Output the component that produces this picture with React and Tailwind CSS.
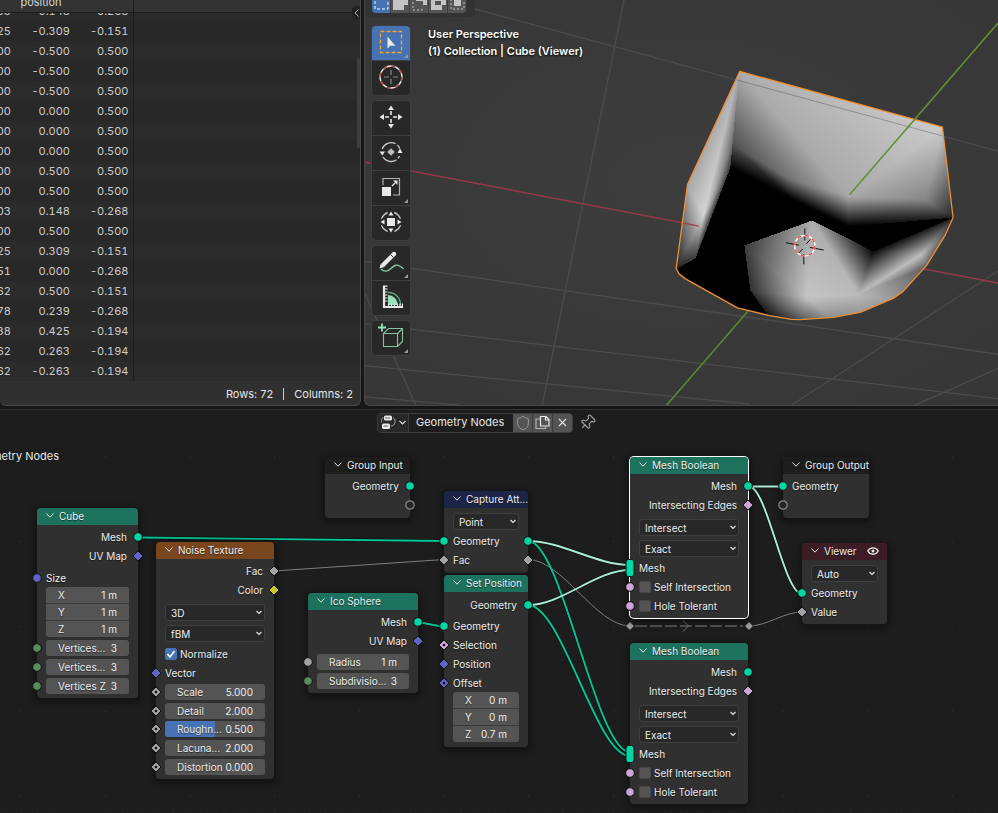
import React from "react";
import { Shield, X, Pin } from "lucide-react";

/* ---------- spreadsheet ---------- */

const ROWS = [
  ["03", "-0.148", "-0.268"],
  ["25", "-0.309", "-0.151"],
  ["00", "-0.500", "0.500"],
  ["00", "-0.500", "0.500"],
  ["00", "-0.500", "0.500"],
  ["00", "0.000", "0.500"],
  ["00", "0.000", "0.500"],
  ["00", "0.000", "0.500"],
  ["00", "0.500", "0.500"],
  ["00", "0.500", "0.500"],
  ["03", "0.148", "-0.268"],
  ["00", "0.500", "0.500"],
  ["25", "0.309", "-0.151"],
  ["51", "0.000", "-0.268"],
  ["62", "0.500", "-0.151"],
  ["78", "0.239", "-0.268"],
  ["38", "0.425", "-0.194"],
  ["62", "0.263", "-0.194"],
  ["62", "-0.263", "-0.194"],
];

function Spreadsheet() {
  return (
    <section className="relative flex min-h-0 min-w-0 flex-col overflow-hidden rounded-b-md border-r border-b border-[#474747] bg-[#303030]">
      <div className="flex h-[13px] shrink-0 items-end overflow-hidden border-b border-[#1c1c1c] bg-[#333333]">
        <div className="flex h-5 w-[134px] shrink-0 items-center justify-center border-r border-[#1c1c1c] pr-[51px] text-[11px] text-[#d6d6d6]">
          position
        </div>
      </div>
      <div className="relative flex min-h-0 flex-1 flex-col justify-end overflow-hidden">
        <table className="w-full shrink-0 table-fixed border-collapse text-[11px] tabular-nums text-[#cccccc]">
          <colgroup>
            <col className="w-[11px]" />
            <col className="w-[59px]" />
            <col className="w-[63px]" />
            <col />
          </colgroup>
          <tbody>
            {ROWS.map((r, i) => (
              <tr key={i} className="h-5 odd:bg-[#2b2b2b] even:bg-[#282828]">
                <td className="p-0">
                  <div className="flex justify-end overflow-hidden leading-5">{r[0]}</div>
                </td>
                <td className="p-0 text-right leading-5">{r[1]}</td>
                <td className="border-r border-[#1c1c1c] p-0 pr-1 text-right leading-5">{r[2]}</td>
                <td className="p-0" />
              </tr>
            ))}
          </tbody>
        </table>
        <div className="absolute top-[45px] right-0 h-[90px] w-[3px] rounded-full bg-[#3d3d3d]" />
      </div>
      <div className="absolute top-1.5 right-0 flex h-[14px] w-2 items-center justify-center rounded-l bg-[#222222]">
        <svg width="5" height="8" viewBox="0 0 5 8" fill="none" stroke="#b0b0b0">
          <path d="M4.5 .5 1 4l3.500 3.500" />
        </svg>
      </div>
      <footer className="flex h-6 shrink-0 items-center justify-end gap-[10px] pt-[2px] pr-[7px] text-[11px] text-[#e6e6e6]">
        <span>Rows: 72</span>
        <span className="h-3 w-px bg-[#d0d0d0]" />
        <span>Columns: 2</span>
      </footer>
    </section>
  );
}

/* ---------- 3D viewport ---------- */

// Vertices of the viewed mesh: x, y, grey level.
const V = {
  tl: [739, 70, 173],
  tr: [944, 126, 204],
  r: [954, 218, 35],
  m: [848, 227, 0],
  mm: [848, 197, 168],
  e: [925, 200, 135],
  bl: [730, 168, 0],
  bm: [732, 145, 80],
  f: [789, 179, 115],
  g: [789, 198, 0],
  l: [686, 185, 165],
  h: [703, 216, 212],
  b: [675, 270, 30],
  c: [695, 259, 60],
  d: [730, 168, 55],
  dm: [732, 145, 110],
  p: [812, 221, 172],
  q: [744, 246, 60],
  t: [750, 291, 50],
  u: [768, 317, 20],
  v: [800, 322, 80],
  w: [807, 298, 196],
  x: [833, 320, 140],
  y: [860, 315, 150],
  k: [858, 295, 186],
  s: [873, 252, 10],
  n: [920, 256, 190],
  o: [928, 267, 90],
  o2: [947, 236, 80],
  z: [896, 301, 150],
};

const TRIANGLES = [
  "tl tr mm", "tl bm f", "tl f mm", "bm bl g", "bm g f", "f g m", "f m mm",
  "m e mm", "m r e", "mm tr e", "tr r e",
  "tl l h", "tl h dm", "dm h d", "l b h", "b c h", "h c d",
  "p q w", "q t w", "t u w", "u v w", "v x w", "w x k", "x y k",
  "p w k", "p s k", "s n k", "s r n", "n r o2", "n o2 o", "k n o", "k o z", "k z y",
];

const grey = (v) => `rgb(${v},${v},${v})`;

// A linear gradient that interpolates the three grey levels over the triangle.
function Triangle({ id, pts }) {
  const [[x0, y0, g0], [x1, y1, g1], [x2, y2, g2]] = pts;
  const det = (x1 - x0) * (y2 - y0) - (x2 - x0) * (y1 - y0);
  const a = ((g1 - g0) * (y2 - y0) - (g2 - g0) * (y1 - y0)) / det;
  const b = ((x1 - x0) * (g2 - g0) - (x2 - x0) * (g1 - g0)) / det;
  const lo = pts.reduce((m, p) => (p[2] < m[2] ? p : m));
  const hi = pts.reduce((m, p) => (p[2] > m[2] ? p : m));
  const k = (hi[2] - lo[2]) / (a * a + b * b);
  return (
    <>
      <linearGradient id={id} gradientUnits="userSpaceOnUse" x1={lo[0]} y1={lo[1]} x2={lo[0] + a * k} y2={lo[1] + b * k}>
        <stop offset="0" stopColor={grey(lo[2])} />
        <stop offset="1" stopColor={grey(hi[2])} />
      </linearGradient>
      <polygon points={pts.map((p) => `${p[0]},${p[1]}`).join(" ")} fill={`url(#${id})`} />
    </>
  );
}

const OUTLINE =
  "M739.300 71.700 942.300 127.500 953 218 945 236 926.500 266 903 292 893 299 860 313 833 318 800 320.300 791 320 768 316 737 308.500 685 279.500 678.500 274.500 675.700 269 687 185Z";

function Scene() {
  return (
    <svg className="absolute inset-0 h-full w-full" viewBox="364 0 634 406" preserveAspectRatio="xMidYMid slice" fill="none">
      <defs>
        <radialGradient id="world" cx="0.5" cy="0.45" r="0.75">
          <stop offset="0" stopColor="#3d3d3d" />
          <stop offset="1" stopColor="#363636" />
        </radialGradient>
        <clipPath id="body"><path d={OUTLINE} /></clipPath>
      </defs>
      <rect x="364" width="634" height="406" fill="url(#world)" />
      <g stroke="#4c4c4c" strokeWidth="1.300">
        <path d="M440 0 640 54 998 151.500M623.500 0 541.500 406M364 262.300 600 296.500 797 325 998 355M364 324.300 600 352.300 998 399.500M364 366.300 750 405M364 397.700 460 406M364 294.300 415 406M791 406 998 271.700M915 406 998 369" />
      </g>
      <path d="M364 162.600 720 230.500M900 265 998 283.700" stroke="#97394a" strokeWidth="1.500" />
      <path d="M747.500 312 666 406" stroke="#5f882b" strokeWidth="1.600" />
      <path d={OUTLINE} fill="#000" />
      <g clipPath="url(#body)">
        <g shapeRendering="crispEdges">
          {TRIANGLES.map((t, i) => (
            <Triangle key={t} id={`tri${i}`} pts={t.split(" ").map((k) => V[k])} />
          ))}
        </g>
        <path d="M640 54 998 151.500" stroke="#000" strokeOpacity="0.25" />
        <path d="M670 221.200 698.500 226.700" stroke="#9c4050" strokeWidth="1.300" />
      </g>
      <path d={OUTLINE} stroke="#ee9135" strokeWidth="1.300" strokeLinejoin="round" />
      <path d="M849.500 195 998 23.300" stroke="#65902d" strokeWidth="1.600" />
      <g stroke="#111" strokeWidth="1">
        <path d="M804.500 229v12M803.500 255v10M785.500 243.300l13 2.400M809.500 248l14 2.600M810 240l-4 4.500M802.500 249.500l-4 4" />
      </g>
      <circle cx="804.500" cy="246.300" r="10.200" stroke="#fff" strokeWidth="1.400" />
      <circle cx="804.500" cy="246.300" r="10.200" stroke="#f0474a" strokeWidth="1.400" strokeDasharray="4 4.010" />
    </svg>
  );
}

const Corner = () => (
  <svg className="absolute right-[2px] bottom-[2px]" width="4" height="4" viewBox="0 0 4 4">
    <path d="M4 0v4H0z" fill="#9a9a9a" />
  </svg>
);

const ICONS = {
  select: (
    <>
      <rect x="2.500" y="2.500" width="21" height="21" stroke="#f5a623" strokeWidth="1.300" strokeDasharray="4 2" />
      <path d="M9.500 7.500v12l3-3 5 .500z" fill="#e8e8e8" />
    </>
  ),
  cursor: (
    <>
      <circle cx="13" cy="13" r="11" stroke="#e8e8e8" strokeWidth="1.300" />
      <circle cx="13" cy="13" r="11" stroke="#a94444" strokeWidth="1.400" strokeDasharray="4.320 4.320" />
      <path d="M13 6v5M13 15v5M6 13h5M15 13h5" stroke="#8a8a8a" strokeWidth="1.200" />
    </>
  ),
  move: (
    <>
      <path d="M13 7v4M13 15v4M7 13h4M15 13h4" stroke="#e8e8e8" strokeWidth="1.600" />
      <path d="M13 1.500 16 6h-6zM13 24.500l3-4.500h-6zM1.500 13 6 10v6zM24.500 13 20 10v6z" fill="#e8e8e8" />
    </>
  ),
  rotate: (
    <>
      <path d="M4.200 10a9.500 9.500 0 0 1 13.300-5.300M5 18a9.500 9.500 0 0 0 13.500 2.800M19.500 6a9.500 9.500 0 0 1 2.200 3.500M20 19.300a9.500 9.500 0 0 0 1.500-2.300" stroke="#c8c8c8" strokeWidth="1.300" />
      <path d="m13 9.200 3.800 3.800-3.800 3.800L9.200 13z" fill="#bdbdbd" />
      <path d="M1.500 12.500h5.500L4.300 16.500zM19.500 14h5L22 9.500z" fill="#e8e8e8" />
    </>
  ),
  scale: (
    <>
      <path d="M5 11V4.500h16.500v16.500H15" stroke="#b0b0b0" strokeWidth="1.200" />
      <path d="M4 13h9v9H4z" fill="#e8e8e8" />
      <path d="m14 12 3-3" stroke="#e8e8e8" strokeWidth="1.300" />
      <path d="M19.500 6.500v4.500l-4.500-4.500z" fill="#e8e8e8" />
    </>
  ),
  transform: (
    <>
      <circle cx="13" cy="13" r="10" stroke="#c8c8c8" strokeWidth="1.300" />
      <path d="M13 .500v7M13 18.500v7M.500 13h7M18.500 13h7" stroke="#282828" strokeWidth="6.500" />
      <path d="M9 9h8v8H9z" fill="#e8e8e8" />
      <path d="m13 2.500 2.500 4h-5zM13 23.500l2.500-4h-5zM2.500 13l4-2.500v5zM23.500 13l-4-2.500v5z" fill="#e8e8e8" />
    </>
  ),
  annotate: (
    <>
      <path d="M3 20c3 3 7 2.500 10-.500s6-6 12.500.500" stroke="#86c9a4" strokeWidth="1.400" />
      <path d="M4.500 16.500 15.500 5.500" stroke="#e8e8e8" strokeWidth="4.200" />
      <path d="m1.500 19.500 1.300-5 3.500 3.500z" fill="#e8e8e8" />
      <circle cx="16" cy="5" r="2.200" fill="#e8e8e8" />
      <path d="m12.500 5.500 3 3" stroke="#282828" />
    </>
  ),
  measure: (
    <>
      <path d="M10 11a10.500 10.500 0 0 1 10 10H10z" fill="#96dfb8" />
      <path d="M10 8.500A12 12 0 0 1 22.500 21" stroke="#5fa482" strokeWidth="1.300" />
      <path d="M6 1.500v21.500h19" stroke="#e8e8e8" strokeWidth="2.200" />
      <path d="M7 2.200h2.500M7 5h2.500M7 8h2.500M7 11h2.500M7 14h2.500M7 17h2.500M10.500 22v-2.500M13.500 22v-2.500M16.500 22v-2.500M19.500 22v-2.500M22 22v-2.500M24.400 22v-2.500" stroke="#e8e8e8" strokeWidth="1.200" />
    </>
  ),
  cube: (
    <>
      <path d="M5.500 9.500h14v13h-14zM5.500 9.500l5-5h14v13l-5 5M19.500 9.500l5-5" stroke="#86bfa0" strokeWidth="1.100" />
      <path d="M4 -.500v8M0 3.500h8" stroke="#96dfb8" strokeWidth="1.800" />
    </>
  ),
};

function Tool({ icon, label, active, corner }) {
  return (
    <button
      aria-label={label}
      className={
        active
          ? "relative flex h-[34px] w-[38px] items-center justify-center bg-[#4772b3] pb-[2px]"
          : "relative flex h-[34px] w-[38px] items-center justify-center bg-[#282828] pb-[2px]"
      }
    >
      <svg width="26" height="26" viewBox="0 0 26 26" fill="none" overflow="visible">{ICONS[icon]}</svg>
      {corner && <Corner />}
    </button>
  );
}

const ToolGroup = ({ children }) => (
  <div className="flex flex-col gap-px overflow-hidden rounded bg-[#3f3f3f] shadow-[0_0_0_1px_#3f3f3f]">{children}</div>
);

const MODES = [
  ["Set selection", <rect key="a" x="3" y="-5" width="13" height="14" stroke="#fff" strokeDasharray="3 2" />],
  ["Extend selection", <path key="a" d="M2 -5h15v10h-4v5H2z" fill="#c4c4c4" />],
  ["Subtract selection", <g key="a"><path d="M6 -5h11v10h-4v-4h-7z" fill="#c4c4c4" /><path d="M3 2v8h9v-3" stroke="#c4c4c4" strokeDasharray="2 2" /></g>],
  ["Invert selection", <path key="a" fillRule="evenodd" d="M2 0h4v-5h11v10h-4v5H2zM6 1v4h6v-4z" fill="#c4c4c4" />],
  ["Intersect selection", <g key="a"><rect x="6" y="0" width="7" height="6" fill="#c4c4c4" /><rect x="3" y="-5" width="13" height="14" stroke="#c4c4c4" strokeDasharray="2 2" /></g>],
];

function Viewport() {
  return (
    <section className="relative min-h-0 min-w-0 overflow-hidden rounded-bl-md border-b border-l border-[#474747] bg-[#393939]">
      <Scene />
      <div className="relative flex h-[17px] w-[110px] items-start rounded-br bg-[#333333] pl-[7px]">
        <div className="flex gap-px overflow-hidden rounded-b bg-[#3f3f3f]">
          {MODES.map(([label, art], i) => (
            <button key={label} aria-label={label} className={i === 0 ? "h-[13px] w-[18px] bg-[#4772b3]" : "h-[13px] w-[18px] bg-[#545454]"}>
              <svg width="18" height="13" viewBox="0 0 18 13" fill="none">{art}</svg>
            </button>
          ))}
        </div>
      </div>
      <div className="relative mt-[9px] flex items-start gap-[18px] pl-[7px]">
        <div className="flex flex-col gap-1.5">
          <ToolGroup>
            <Tool icon="select" label="Select Box" active corner />
            <Tool icon="cursor" label="Cursor" />
          </ToolGroup>
          <ToolGroup>
            <Tool icon="move" label="Move" />
            <Tool icon="rotate" label="Rotate" />
            <Tool icon="scale" label="Scale" corner />
            <Tool icon="transform" label="Transform" />
          </ToolGroup>
          <ToolGroup>
            <Tool icon="annotate" label="Annotate" corner />
            <Tool icon="measure" label="Measure" />
          </ToolGroup>
          <ToolGroup>
            <Tool icon="cube" label="Add Cube" corner />
          </ToolGroup>
        </div>
        <div className="text-[11px] leading-[17px] font-semibold text-white [text-shadow:0_1px_2px_#000]">
          <p>User Perspective</p>
          <p>(1) Collection | Cube (Viewer)</p>
        </div>
      </div>
    </section>
  );
}

/* ---------- node parts ---------- */

const SOCKETS = {
  geometry: "#00d6a3",
  vector: "#6363c7",
  int: "#598c5c",
  float: "#a1a1a1",
  bool: "#cca6d6",
  color: "#c7c729",
};

function Socket({ type, shape = "circle", side }) {
  const fill = SOCKETS[type];
  return (
    <svg
      className={
        side === "right"
          ? "absolute top-1/2 right-0 z-10 translate-x-1/2 -translate-y-1/2"
          : "absolute top-1/2 left-0 z-10 -translate-x-1/2 -translate-y-1/2"
      }
      width="12"
      height="20"
      viewBox="-6 -10 12 20"
      stroke="#141414"
    >
      {shape === "circle" && <circle r="4.300" fill={fill} />}
      {shape === "diamond" && <path d="M0-5 5 0 0 5-5 0z" fill={fill} />}
      {shape === "field" && (
        <>
          <path d="M0-5 5 0 0 5-5 0z" fill={fill} />
          <circle r="1.300" fill="#141414" stroke="none" />
        </>
      )}
      {shape === "multi" && <rect x="-4" y="-8.500" width="8" height="17" rx="2.500" fill={fill} />}
      {shape === "empty" && <circle r="4.200" fill="#262626" stroke="#8a8a8a" strokeWidth="1.200" />}
    </svg>
  );
}

function Node({ title, place, head, selected, icon, children }) {
  return (
    <article
      className={`absolute rounded text-[10px] leading-4 text-[#ececec] bg-[#303030] [text-shadow:0_1px_1px_rgba(0,0,0,0.5)] ${
        selected ? "shadow-[0_0_0_1px_#ffffff,0_2px_7px_3px_rgba(0,0,0,0.45)]" : "shadow-[0_0_0_1px_#161616,0_2px_7px_2px_rgba(0,0,0,0.45)]"
      } ${place}`}
    >
      <header className={`flex h-[17px] items-center rounded-t pr-2 pb-[2px] pl-[9px] ${head}`}>
        <button aria-label={`Collapse ${title}`} className="mr-[5px] shrink-0">
          <svg width="8" height="5" viewBox="0 0 8 5" fill="none" stroke="#e4e4e4">
            <path d="M.500.500 4 4.200 7.500.500" />
          </svg>
        </button>
        <h2 className="flex-1 whitespace-nowrap">{title}</h2>
        {icon}
      </header>
      <div className="flex flex-col gap-[3px] pt-[3px]">{children}</div>
    </article>
  );
}

const Rows = ({ size, children }) => <div className={`grid auto-rows-fr ${size}`}>{children}</div>;

const Output = ({ label, ...socket }) => (
  <div className="relative flex items-center justify-end pr-[11px] whitespace-nowrap">
    {label}
    <Socket side="right" {...socket} />
  </div>
);

const Input = ({ label, out, ...socket }) => (
  <div className="relative flex items-center pl-[9px] whitespace-nowrap">
    <Socket {...socket} />
    {label}
    {out && <Socket side="right" {...socket} />}
  </div>
);

function Field({ label, value, fill, ...socket }) {
  return (
    <div className="relative flex items-center px-[9px]">
      {socket.type && <Socket {...socket} />}
      <label className="relative flex h-4 flex-1 items-center overflow-hidden rounded-[3px] bg-[#545454] px-3">
        {fill && <span className="absolute inset-y-0 left-0 w-1/2 bg-[#4772b3]" />}
        <span className="relative whitespace-nowrap">{label}</span>
        <input defaultValue={value} className="relative w-0 min-w-0 flex-1 bg-transparent text-right outline-none" />
      </label>
    </div>
  );
}

const VectorField = ({ name, values }) => (
  <div className="mx-[9px] grid h-[50px] auto-rows-fr gap-px overflow-hidden rounded-[3px] bg-[#3a3a3a]">
    {["X", "Y", "Z"].map((axis, i) => (
      <label key={axis} className="flex items-center bg-[#545454] px-3">
        <span>{axis}</span>
        <input aria-label={`${name} ${axis}`} defaultValue={values[i]} className="w-0 min-w-0 flex-1 bg-transparent text-right outline-none" />
      </label>
    ))}
  </div>
);

const Menu = ({ name, value }) => (
  <div className="relative flex h-[21px] items-center px-[9px]">
    <select aria-label={name} defaultValue={value} className="h-[17px] w-full appearance-none rounded-[3px] border border-[#3f3f3f] bg-[#282828] pl-[5px] leading-[14px] outline-none">
      <option>{value}</option>
    </select>
    <svg className="pointer-events-none absolute right-3" width="6" height="5" viewBox="0 0 6 5" fill="none" stroke="#e4e4e4" strokeWidth="1.200">
      <path d="M.500 1 3 3.500 5.500 1" />
    </svg>
  </div>
);

function Check({ label, checked, ...socket }) {
  return (
    <div className="relative flex items-center pl-[9px]">
      {socket.type && <Socket {...socket} />}
      <label className="relative flex items-center gap-[3px] whitespace-nowrap">
        <input type="checkbox" defaultChecked={checked} className="peer size-3 appearance-none rounded-[2px] border border-[#484848] bg-[#545454] checked:border-[#4772b3] checked:bg-[#4772b3]" />
        <svg className="pointer-events-none absolute left-0 hidden peer-checked:block" width="12" height="12" viewBox="0 0 12 12" fill="none" stroke="#fff" strokeWidth="1.600">
          <path d="m2.500 6 2.500 3 4.500-6" />
        </svg>
        {label}
      </label>
    </div>
  );
}

function MeshBoolean({ place, selected }) {
  return (
    <Node title="Mesh Boolean" head="bg-[#1d725e]" selected={selected} place={place}>
      <Rows size="h-[37px]">
        <Output label="Mesh" type="geometry" />
        <Output label="Intersecting Edges" type="bool" shape="diamond" />
      </Rows>
      <div className="pb-[3px]">
        <Menu name="Operation" value="Intersect" />
        <Menu name="Solver" value="Exact" />
        <Rows size="h-[56px]">
          <Input label="Mesh" type="geometry" shape="multi" />
          <Check label="Self Intersection" type="bool" />
          <Check label="Hole Tolerant" type="bool" />
        </Rows>
      </div>
    </Node>
  );
}

/* ---------- node editor ---------- */

const Wires = () => (
  <svg className="absolute inset-0 h-full w-full" fill="none">
    <defs>
      <pattern id="dots" x="20" y="21.300" width="84.700" height="84.700" patternUnits="userSpaceOnUse">
        {[0, 1, 2, 3, 4].map((r) =>
          [0, 1, 2, 3, 4].map((c) => (
            <rect key={`${r}${c}`} x={c * 16.94} y={r * 16.94} width="1.200" height="1.200" fill={r + c === 0 ? "#323232" : "#252525"} />
          ))
        )}
      </pattern>
    </defs>
    <rect width="100%" height="100%" fill="url(#dots)" />
    <g transform="translate(0 -435)">
      <g stroke="#0d0d0d" strokeWidth="3.500" strokeOpacity="0.6">
        <path d="M138 537.500 444 541M418 622 444 627" />
        <path d="M528 541C562 541 596 565 630 565M528 605C562 605 596 570 630 570M528 541C562 541 596 752 630 752M528 605C562 605 596 756 630 756" />
        <path d="M749 486.500H783M749 486.500C767 486.500 784 594 802 594" />
      </g>
      <g stroke="#7d7d7d">
        <path d="M274 571 444 559.500M528 559.500C562 559.500 596 626 630 626M749 626C767 626 784 612 802 612" />
        <path d="M635 626H743" strokeDasharray="12 3" strokeWidth="1.300" stroke="#666" />
        <path d="m683 620.500 5.500 5.500-5.500 5.500" stroke="#777" />
      </g>
      <g stroke="#00c596" strokeWidth="1.900">
        <path d="M138 537.500 444 541M418 622 444 627M528 541C562 541 596 752 630 752M528 605C562 605 596 756 630 756" />
      </g>
      <g stroke="#a9ecd9" strokeWidth="1.900">
        <path d="M528 541C562 541 596 565 630 565M528 605C562 605 596 570 630 570M749 486.500H783M749 486.500C767 486.500 784 594 802 594" />
      </g>
      <path d="m630 621.500 4.500 4.500-4.500 4.500-4.500-4.500zM749 621.500l4.500 4.500-4.500 4.500-4.500-4.500z" fill="#a1a1a1" stroke="#141414" />
    </g>
  </svg>
);

const EyeIcon = (
  <svg width="12" height="10" viewBox="0 0 12 10" fill="none" stroke="#e8e8e8" strokeWidth="1.300">
    <path d="M.800 5C3 .700 9 .700 11.200 5 9 9.300 3 9.300.800 5z" />
    <circle cx="6" cy="5" r="1.500" fill="#e8e8e8" stroke="none" />
  </svg>
);

function NodeEditor() {
  return (
    <section className="flex min-h-0 min-w-0 flex-col overflow-hidden border-t border-[#303030] bg-[#1d1d1d]">
      <header className="flex h-[25px] shrink-0 items-center pl-[377px]">
        <div className="flex h-5 overflow-hidden rounded border border-[#3d3d3d]">
          <button aria-label="Browse node trees" className="flex w-[31px] items-center justify-center gap-[3px] border-r border-[#3d3d3d] bg-[#282828]">
            <svg width="15" height="15" viewBox="0 0 15 15" fill="none">
              <rect x="3" y=".500" width="8" height="5" rx="1.500" fill="#e8e8e8" />
              <rect x="1" y="8.500" width="8" height="5.500" rx="1.500" fill="#e8e8e8" />
              <path d="M12 3c3 0 3 8-2 8M2.500 3C0 3 0 6 1 7.500" stroke="#a8a8a8" />
              <path d="M4 3h5M2.500 11h4.500" stroke="#444" strokeWidth=".800" />
            </svg>
            <svg width="7" height="5" viewBox="0 0 7 5" fill="none" stroke="#e4e4e4" strokeWidth="1.200">
              <path d="M.500.800 3.500 3.800 6.500.800" />
            </svg>
          </button>
          <input aria-label="Node tree name" defaultValue="Geometry Nodes" className="w-[104px] bg-[#1d1d1d] px-[7px] text-[11px] text-[#e6e6e6] outline-none" />
          <div className="flex gap-px bg-[#3d3d3d]">
            <button aria-label="Fake user" className="flex w-[19px] items-center justify-center bg-[#545454]">
              <Shield size={16} strokeWidth={1.5} color="#9c9c9c" />
            </button>
            <button aria-label="New node tree" className="flex w-[19px] items-center justify-center bg-[#545454]">
              <svg width="15" height="15" viewBox="0 0 15 15" fill="none" stroke="#e8e8e8" strokeWidth="1.200">
                <path d="M5.500 1.500h5.500l3 3v6.500H5.500zM10.500 1.500v3.500h3.500" />
                <path d="M5 4H1v9.500h9.500V11.500" stroke="#b4b4b4" />
              </svg>
            </button>
            <button aria-label="Unlink node tree" className="flex w-[19px] items-center justify-center bg-[#545454]">
              <X size={13} strokeWidth={2} color="#e4e4e4" />
            </button>
          </div>
        </div>
        <button aria-label="Pin" className="ml-[6px]">
          <Pin size={17} strokeWidth={1.6} color="#9c9c9c" className="rotate-45" />
        </button>
      </header>

      <div className="relative min-h-0 flex-1 overflow-hidden">
        <Wires />
        <p className="relative flex h-[42px] w-[59px] items-center justify-end overflow-hidden text-[11px] whitespace-nowrap text-[#e6e6e6]">Geometry Nodes</p>

        <Node title="Cube" head="bg-[#1d725e]" place="left-[37px] top-[73px] w-[101px]">
          <Rows size="h-[37px]">
            <Output label="Mesh" type="geometry" />
            <Output label="UV Map" type="vector" shape="diamond" />
          </Rows>
          <div className="pb-[3px]">
            <Rows size="h-[19px]"><Input label="Size" type="vector" /></Rows>
            <VectorField name="Size" values={["1 m", "1 m", "1 m"]} />
            <div className="pt-[2px]">
              <Rows size="h-[56px]">
                <Field label="Vertices..." value="3" type="int" />
                <Field label="Vertices..." value="3" type="int" />
                <Field label="Vertices Z" value="3" type="int" />
              </Rows>
            </div>
          </div>
        </Node>

        <Node title="Noise Texture" head="bg-[#79461d]" place="left-[156px] top-[107px] w-[118px]">
          <Rows size="h-[37px]">
            <Output label="Fac" type="float" shape="diamond" />
            <Output label="Color" type="color" shape="diamond" />
          </Rows>
          <div className="pb-[3px]">
            <Menu name="Dimensions" value="3D" />
            <Menu name="Noise type" value="fBM" />
            <Rows size="h-[20px]"><Check label="Normalize" checked /></Rows>
            <Rows size="h-[112px]">
              <Input label="Vector" type="vector" shape="diamond" />
              <Field label="Scale" value="5.000" type="float" shape="field" />
              <Field label="Detail" value="2.000" type="float" shape="field" />
              <Field label="Roughn..." value="0.500" fill type="float" shape="field" />
              <Field label="Lacuna..." value="2.000" type="float" shape="field" />
              <Field label="Distortion" value="0.000" type="float" shape="field" />
            </Rows>
          </div>
        </Node>

        <Node title="Ico Sphere" head="bg-[#1d725e]" place="left-[308px] top-[158px] w-[110px]">
          <Rows size="h-[37px]">
            <Output label="Mesh" type="geometry" />
            <Output label="UV Map" type="vector" shape="diamond" />
          </Rows>
          <div className="pb-[3px]">
            <Rows size="h-[37px]">
              <Field label="Radius" value="1 m" type="float" />
              <Field label="Subdivisio..." value="3" type="int" />
            </Rows>
          </div>
        </Node>

        <Node title="Group Input" head="bg-[#1d1d1d]" place="left-[325px] top-[22px] w-[85px]">
          <div className="pb-1">
            <Rows size="h-[37px]">
              <Output label="Geometry" type="geometry" />
              <Output label="" shape="empty" />
            </Rows>
          </div>
        </Node>

        <Node title="Capture Att..." head="bg-[#1d2546]" place="left-[444px] top-[56px] w-[84px]">
          <div className="pb-1">
            <Menu name="Domain" value="Point" />
            <Rows size="h-[37px]">
              <Input label="Geometry" type="geometry" out />
              <Input label="Fac" type="float" shape="diamond" out />
            </Rows>
          </div>
        </Node>

        <Node title="Set Position" head="bg-[#1d725e]" place="left-[444px] top-[140px] w-[84px]">
          <Rows size="h-[19px]"><Output label="Geometry" type="geometry" /></Rows>
          <div className="pb-[5px]">
            <Rows size="h-[75px]">
              <Input label="Geometry" type="geometry" />
              <Input label="Selection" type="bool" shape="field" />
              <Input label="Position" type="vector" shape="diamond" />
              <Input label="Offset" type="vector" shape="field" />
            </Rows>
            <VectorField name="Offset" values={["0 m", "0 m", "0.7 m"]} />
          </div>
        </Node>

        <MeshBoolean selected place="left-[630px] top-[22px] w-[118px]" />
        <MeshBoolean place="left-[630px] top-[208px] w-[118px]" />

        <Node title="Group Output" head="bg-[#1d1d1d]" place="left-[783px] top-[22px] w-[86px]">
          <div className="pb-1">
            <Rows size="h-[37px]">
              <Input label="Geometry" type="geometry" />
              <Input label="" shape="empty" />
            </Rows>
          </div>
        </Node>

        <Node title="Viewer" head="bg-[#3c1d26]" icon={EyeIcon} place="left-[802px] top-[108px] w-[85px]">
          <div className="pb-[3px]">
            <Menu name="Domain" value="Auto" />
            <Rows size="h-[37px]">
              <Input label="Geometry" type="geometry" />
              <Input label="Value" type="float" shape="diamond" />
            </Rows>
          </div>
        </Node>
      </div>
    </section>
  );
}

export default function App() {
  return (
    <main className="grid h-screen grid-rows-[406fr_404fr] gap-[3px] overflow-hidden bg-[#161616] font-['Inter','Noto_Sans',sans-serif]">
      <div className="grid min-h-0 grid-cols-[361fr_634fr] gap-[3px]">
        <Spreadsheet />
        <Viewport />
      </div>
      <NodeEditor />
    </main>
  );
}
